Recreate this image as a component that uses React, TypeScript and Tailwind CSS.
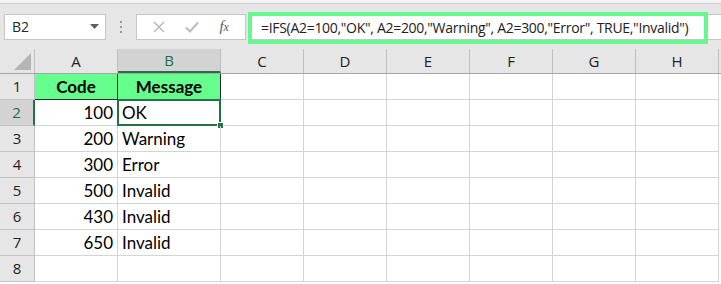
import React from "react";

const cols = [
  { key: "A", w: "w-[83px]" },
  { key: "B", w: "w-[103px]" },
  { key: "C", w: "w-[83px]" },
  { key: "D", w: "w-[83px]" },
  { key: "E", w: "w-[83px]" },
  { key: "F", w: "w-[83px]" },
  { key: "G", w: "w-[83px]" },
  { key: "H", w: "w-[83px]" },
];

const data = [
  ["100", "OK"],
  ["200", "Warning"],
  ["300", "Error"],
  ["500", "Invalid"],
  ["430", "Invalid"],
  ["650", "Invalid"],
  ["", ""],
];

const cellFont = "font-['Lato','Liberation_Sans',sans-serif] text-[17px] text-black";
const headFont = "font-['Open_Sans','Liberation_Sans',sans-serif] text-[15px]";

function NameBox() {
  return (
    <div className="ml-[4px] w-[102px] h-[26px] bg-white border border-[#c6c6c6] flex items-center justify-between pl-[7px] pr-[6px]">
      <span className="font-['Open_Sans',sans-serif] text-[14px] text-[#262626]">B2</span>
      <svg width="9" height="5" viewBox="0 0 9 5">
        <path d="M0 0H9L4.5 5Z" fill="#5f5f5f" />
      </svg>
    </div>
  );
}

function FormulaButtons() {
  return (
    <div className="w-[110px] h-[26px] bg-white border border-[#c6c6c6] flex items-center justify-around px-[6px]">
      <svg width="12" height="12" viewBox="0 0 12 12">
        <path d="M1 1L11 11M11 1L1 11" stroke="#bcbcbc" strokeWidth="1.6" />
      </svg>
      <svg width="14" height="12" viewBox="0 0 14 12">
        <path d="M1 6.5L5 10.5L13 1.5" stroke="#bcbcbc" strokeWidth="2" fill="none" />
      </svg>
      <span className="font-['Liberation_Serif',serif] italic text-[15px] text-[#5a5a5a] leading-none">
        f<span className="text-[12px]">x</span>
      </span>
    </div>
  );
}

export default function App() {
  return (
    <div className="w-[721px] h-[284px] bg-white overflow-hidden">
      {/* ribbon remnant */}
      <div className="h-[4px] bg-[#f4f4f4] border-b border-[#cfcfcf]" />

      {/* formula bar */}
      <div className="h-[45px] bg-[#e6e6e6] flex items-center">
        <NameBox />
        <div className="w-[30px] flex flex-col items-center gap-[3px]">
          <span className="w-[2px] h-[2px] bg-[#9a9a9a]" />
          <span className="w-[2px] h-[2px] bg-[#9a9a9a]" />
          <span className="w-[2px] h-[2px] bg-[#9a9a9a]" />
        </div>
        <FormulaButtons />
        <div className="relative flex-1 h-[26px] ml-[2px] bg-white border-y border-[#c6c6c6]">
          <div className="absolute left-0 -top-[3px] w-[460px] h-[32px] border-[4px] border-[#66f78e] flex items-center pl-[9px]">
            <span className="font-['Open_Sans',sans-serif] text-[14px] tracking-[-0.3px] text-[#222] whitespace-nowrap">
              =IFS(A2=100,"OK", A2=200,"Warning", A2=300,"Error", TRUE,"Invalid")
            </span>
          </div>
        </div>
      </div>

      {/* column headers */}
      <div className="flex h-[25px] bg-[#e6e6e6] border-b border-[#a6a6a6]">
        <div className="w-[35px] h-full border-r border-[#bfbfbf] flex items-end justify-end pr-[3px] pb-[3px]">
          <svg width="17" height="17" viewBox="0 0 17 17">
            <path d="M17 0V17H0Z" fill="#b5b5b5" />
          </svg>
        </div>
        {cols.map((c) => (
          <div
            key={c.key}
            className={`${c.w} h-full flex items-center justify-center border-r ${headFont} ${
              c.key === "B"
                ? "bg-[#d3d3d3] text-[#1f6e43] border-[#bfbfbf] border-b-2 border-b-[#217346]"
                : "text-[#222] border-[#bfbfbf]"
            }`}
          >
            {c.key}
          </div>
        ))}
      </div>

      {/* row 1 */}
      <div className="flex h-[26px]">
        <div className={`w-[35px] h-full bg-[#e6e6e6] border-r border-b border-[#c2c2c2] flex items-center justify-center ${headFont} text-[#222]`}>
          1
        </div>
        <div className={`w-[83px] h-full bg-[#66ff8e] border-r border-b border-[#2a2a2a] flex items-center justify-center font-bold ${cellFont}`}>
          Code
        </div>
        <div className={`w-[103px] h-full bg-[#66ff8e] border-r border-b border-[#2a2a2a] flex items-center justify-center font-bold ${cellFont}`}>
          Message
        </div>
        {cols.slice(2).map((c) => (
          <div key={c.key} className={`${c.w} h-full border-r border-b border-[#d4d4d4]`} />
        ))}
      </div>

      {/* data rows */}
      {data.map((row, i) => {
        const n = i + 2;
        const selected = n === 2;
        return (
          <div key={n} className="flex h-[26px]">
            <div
              className={`w-[35px] h-full border-b border-[#c2c2c2] flex items-center justify-center ${headFont} ${
                selected
                  ? "bg-[#d3d3d3] text-[#1f6e43] border-r-2 border-r-[#217346]"
                  : "bg-[#e6e6e6] text-[#222] border-r border-r-[#c2c2c2]"
              }`}
            >
              {n}
            </div>
            <div className={`w-[83px] h-full border-r border-b border-[#d4d4d4] flex items-center justify-end pr-[4px] ${cellFont}`}>
              {row[0]}
            </div>
            <div className={`relative w-[103px] h-full border-r border-b border-[#d4d4d4] flex items-center pl-[4px] ${cellFont}`}>
              {row[1]}
              {selected && (
                <>
                  <div className="absolute -left-[1px] -top-[1px] -right-[1px] -bottom-[1px] border-2 border-[#217346]" />
                  <div className="absolute -right-[3px] -bottom-[3px] w-[5px] h-[5px] bg-[#217346] outline outline-1 outline-white" />
                </>
              )}
            </div>
            {cols.slice(2).map((c) => (
              <div key={c.key} className={`${c.w} h-full border-r border-b border-[#d4d4d4]`} />
            ))}
          </div>
        );
      })}
    </div>
  );
}
